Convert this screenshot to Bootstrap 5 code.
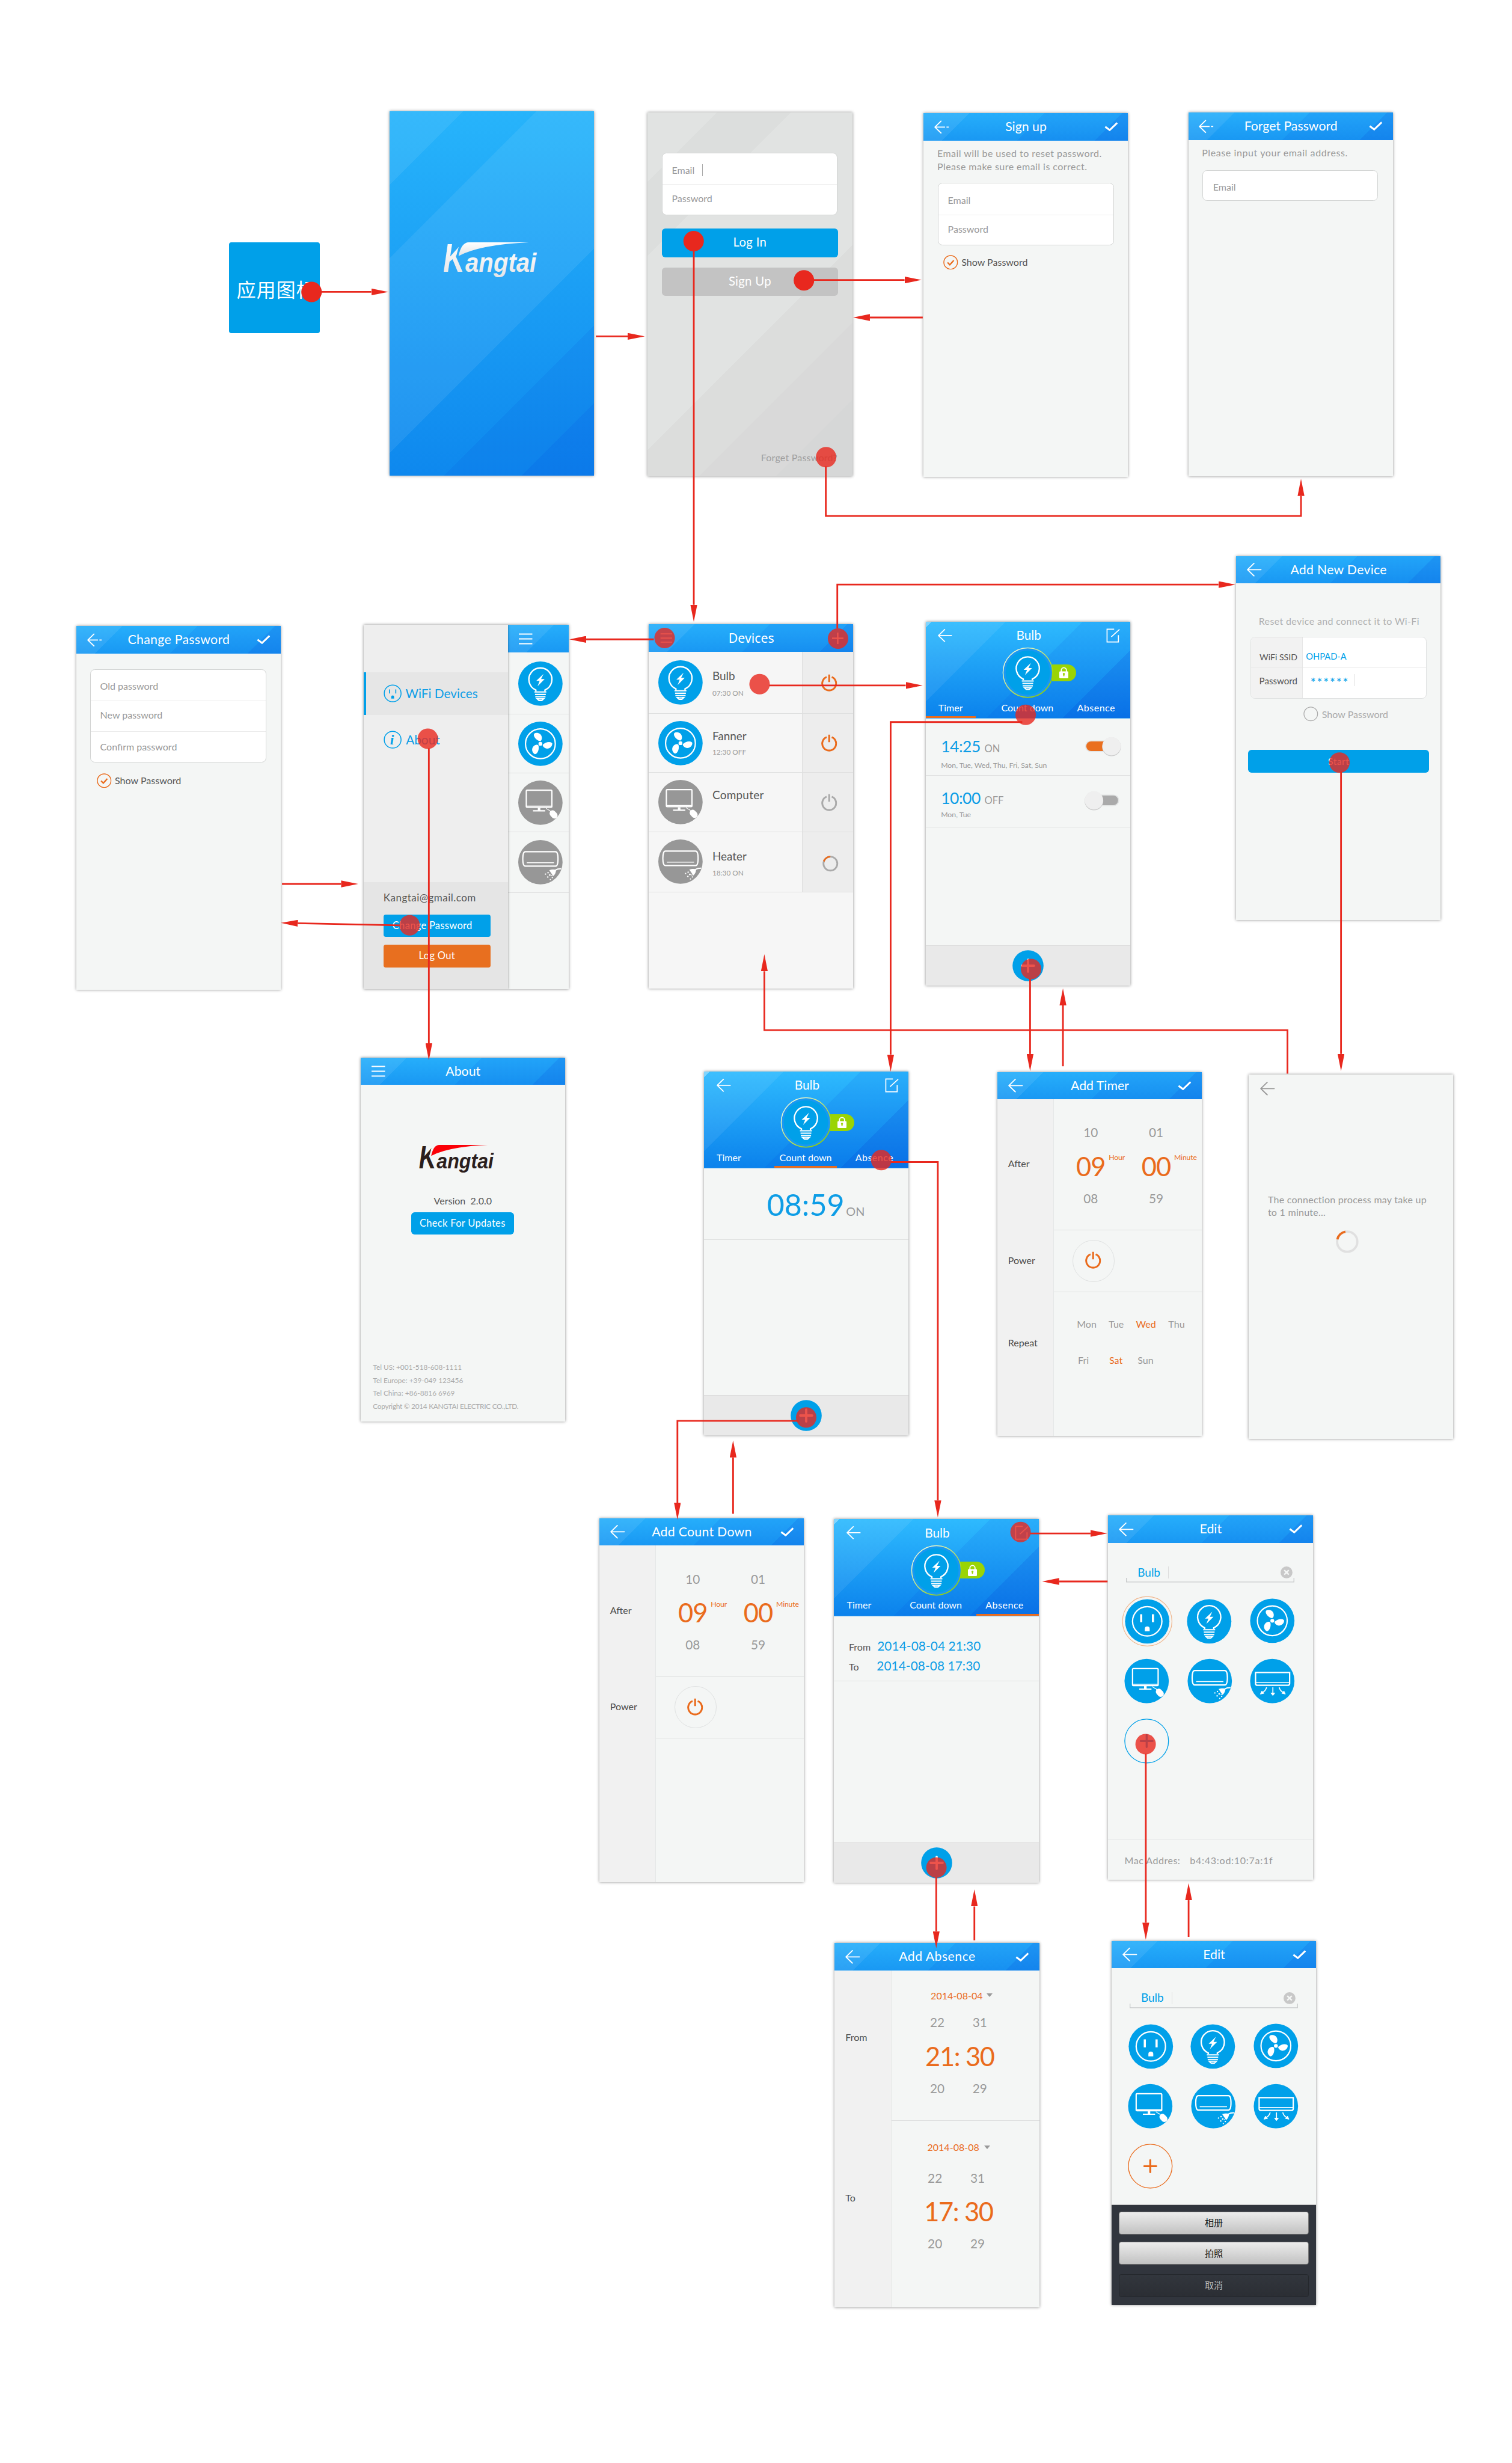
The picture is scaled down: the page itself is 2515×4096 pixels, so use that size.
<!DOCTYPE html>
<html lang="en">
<head>
<meta charset="utf-8">
<title>Kangtai app flow</title>
<link href="https://cdn.jsdelivr.net/npm/bootstrap@5.3.0/dist/css/bootstrap.min.css" rel="stylesheet">
<script src="https://cdn.jsdelivr.net/npm/bootstrap@5.3.0/dist/js/bootstrap.bundle.min.js"></script>
<style>
html,body{margin:0;background:#fff;overflow:hidden}
body{font-family:Lato,"Noto Sans CJK SC",sans-serif;font-size:17px;line-height:1.2;color:#555}
.board{position:relative;width:2659px;height:4331px;zoom:.9457}
svg{display:block;flex:none;overflow:visible}
/* screens placed on the free canvas */
.screen{position:absolute;width:360px;height:640px;background:#f4f6f5;box-shadow:0 0 5px rgba(0,0,0,.45);overflow:hidden}
#s-splash{left:685px;top:196px}#s-login{left:1139px;top:198px}#s-signup{left:1624px;top:199px}#s-forget{left:2090px;top:198px}
#s-change{left:134px;top:1101px}#s-side{left:640px;top:1099px}#s-devices{left:1141px;top:1098px}#s-timer{left:1628px;top:1093px}#s-new{left:2174px;top:978px}
#s-about{left:634px;top:1860px}#s-count{left:1238px;top:1884px}#s-addtimer{left:1754px;top:1885px}#s-connect{left:2196px;top:1890px}
#s-addcount{left:1054px;top:2670px}#s-absence{left:1467px;top:2671px}#s-edit{left:1949px;top:2665px}
#s-addabs{left:1468px;top:3417px}#s-edit2{left:1955px;top:3413px}
.app-tile{position:absolute;left:403px;top:426px;width:160px;height:160px;border-radius:4px;background:#00a0e9;color:#fff;font-size:34px;letter-spacing:1px;padding:7px 0 0 6px;white-space:nowrap}
.flow{position:absolute;left:0;top:0;z-index:5;pointer-events:none}
/* fills */
.bg-splash{background:linear-gradient(135deg,rgba(255,255,255,.07) 0 91.5px,transparent 91.5px 183px,rgba(255,255,255,.07) 183px 425px,transparent 425px 521px,rgba(0,60,210,.09) 521px 617px,rgba(0,50,210,.17) 617px),linear-gradient(#27b4fb,#0e88ee)}
.bg-login{background:linear-gradient(135deg,#e1e3e2 0 86px,#dcdedd 86px 178px,#e1e3e2 178px 420px,#dcdddc 420px 516px,#d9d9d9 516px 612px,#d6d7d7 612px)}
.topbar{height:48px;color:#fff;font-size:22.5px;padding:0 18px 0 19px;flex:none;background:linear-gradient(135deg,rgba(255,255,255,.08) 0 57px,transparent 57px 151px,rgba(0,70,220,.1) 151px 247px,rgba(0,60,215,.22) 247px),linear-gradient(#26aefb,#1998f3)}
.topbar .side-slot{width:44px;flex:none}
.hero{height:171px;color:#fff;flex:none;background:linear-gradient(135deg,rgba(255,255,255,.4) 0 7px,rgba(255,255,255,.07) 7px 99px,transparent 99px 195px,rgba(0,70,220,.1) 195px 290px,rgba(0,50,210,.22) 290px),linear-gradient(#2ebafe,#0b82ec);border-bottom:1px solid #4aa9f2}
.hero-top{height:45px;padding:4px 18px 0 21px;font-size:22px}
.hero-icon{height:90px}
.lock-tab{position:absolute;left:222px;top:30px;width:43px;height:30px;border-radius:0 15px 15px 0;background:#9ad404;padding-left:13px}
.tabs{height:35px;font-size:17px}
.tab-item{height:35px;padding-top:7px;text-align:center;border-bottom:4px solid transparent;line-height:20px;white-space:nowrap}
.tab-item.on{border-color:#ea6b1c}
.tab-a{width:88px;margin-right:36px}.tab-b{width:110px;margin-right:16px}.tab-c{width:110px;padding-right:10px;letter-spacing:.5px}
.ctl{border-radius:6px;border:0;color:#fff;background:#00a0e9;padding:0;display:flex;align-items:center;justify-content:center;--bs-btn-line-height:1.2;letter-spacing:.3px}
.ctl-lg{width:310px;height:50px;font-size:21.5px;padding-bottom:3px}
.field-box{background:#fff;border:1.5px solid #d2d4d3;border-radius:8px;width:309px;color:#999}
.field-box>div{padding-left:16px}
.field-box>div+div{border-top:1px solid #ececec}
.hint{color:#999;line-height:23px;letter-spacing:.45px}
.caret{width:1px;height:21px;background:#aaa}
.g9{color:#999}.ga{color:#aaa}.blue{color:#00a0e9}.orange{color:#ea6b1c}.cyan-t{color:#0d9de6}
.list-line{border-bottom:1.5px solid #dedfdf}
.disc{width:78px;height:78px}
.foot-bar{height:71px;background:#e9e9e9;border-top:1.5px solid #dcdcdc}
.label-col{width:100px;background:#f1f1f1;border-right:1.5px solid #e5e7e7;padding-left:19px;flex:none;color:#4c4c4c}
.label-col>div{padding-bottom:5px}
.num{font-size:22px;color:#999;height:58px;width:115px}
.num.big{font-size:46px;color:#ea6b1c;letter-spacing:-1px}
.unit{position:absolute;left:100%;margin-left:6px;top:5px;font-size:13px;font-weight:400;letter-spacing:-.2px;line-height:16px}
.pnum{width:75px;height:58px;font-size:22px;color:#999}
.tri{width:0;height:0;border:5.5px solid transparent;border-top:7px solid #999;border-bottom:0}
.sheet{background:#31353d;height:177px;border-top:1px solid #bbb;padding:12px 12.5px}
.sheet-btn{height:40px;width:335px;border-radius:4px;border:1px solid #777;background:linear-gradient(#ececec,#c2c2c2);color:#111;font-size:16px;padding:0}
.sheet-btn.dark{background:linear-gradient(#32363d,#2b2e34);border-color:#25282d;color:#bbb}
</style>
</head>
<body>
<svg width="0" height="0" style="position:absolute">
<defs>
<linearGradient id="lg" x1="0" y1="0" x2="0" y2="1"><stop offset="0" stop-color="#fff"/><stop offset="1" stop-color="#e4e4e6"/></linearGradient>
<linearGradient id="ringg" x1="0" y1="0" x2="1" y2="1"><stop offset=".2" stop-color="#e9f5d0"/><stop offset=".8" stop-color="#9ad404"/></linearGradient>
<symbol id="back" viewBox="0 0 26 24"><path d="M12.5 1 1.2 12l11.3 11M1.5 12H25" fill="none" stroke="currentColor" stroke-width="2" stroke-linecap="round" stroke-linejoin="round"/></symbol>
<symbol id="backd" viewBox="0 0 26 24"><path d="M12.5 1 1.2 12l11.3 11M1.5 12H19M21.5 12H25.6" fill="none" stroke="currentColor" stroke-width="2" stroke-linejoin="round"/></symbol>
<symbol id="check" viewBox="0 0 24 16"><path d="M1.5 8.2 9.3 14 22.5 1.5" fill="none" stroke="currentColor" stroke-width="3.2"/></symbol>
<symbol id="menu" viewBox="0 0 24 20"><path d="M0 1.5h24M0 10h24M0 18.5h24" stroke="currentColor" stroke-width="2.2"/></symbol>
<symbol id="pen" viewBox="0 0 24 26"><path d="M14 1.5H1.5v22.5h20V12M23.5 1.8 9 15" fill="none" stroke="currentColor" stroke-width="1.8"/></symbol>
<symbol id="bulb" viewBox="0 0 78 78"><g fill="none" stroke="#fff"><path d="M31 52.5v-2.2A20.3 20.3 0 1 1 47 50.3v2.2" stroke-width="2.5"/><path d="M28.5 53.7h21M29.5 58h19M30 62.2h18" stroke-width="2.2"/></g><path d="M30.5 64.5h17l-5.5 5.2h-6z" fill="#fff"/><path d="M36 66.6h6" stroke="#00a0e9"/><path d="M44.5 22 31.7 34.2h6L34 43.5 46.5 31h-6.3z" fill="#fff"/></symbol>
<symbol id="fan" viewBox="0 0 78 78"><circle cx="39" cy="39" r="26.2" fill="none" stroke="#fff" stroke-width="2.3"/><g fill="#fff"><path id="bl" d="M38.5 34.5C32 33.500 25.500 25.500 28 21.500C32 18 40.500 20.500 41.500 27.500C42 31 40.500 34 38.500 34.500z"/><use href="#bl" transform="rotate(120 39 39)"/><use href="#bl" transform="rotate(240 39 39)"/><circle cx="39" cy="39" r="3.4"/></g></symbol>
<symbol id="pc" viewBox="0 0 78 78"><g fill="none" stroke="#fff"><rect x="14.200" y="17" width="45" height="30" rx="1.500" stroke-width="2.300"/><path d="M14 44.800h45" stroke-width="1.500"/><path d="M36.700 48v5" stroke-width="4.500"/><path d="M26 53.200h21.500" stroke-width="2.300"/><path d="M49 48.500c2 4 7 2 8 6.500" stroke-width="1.200"/></g><path d="M0-7.500C5-7.500 5.500-3 5.500 1.500C5.500 6.500 2.500 8 0 8S-5.500 6.500-5.500 1.500C-5.500-3-5-7.500 0-7.500z" fill="#fff" transform="translate(62 59.500) rotate(-42)"/></symbol>
<symbol id="heat" viewBox="0 0 78 78"><g fill="none" stroke="#fff" stroke-width="2.300"><path d="M12.500 20.500h53q4.500 0 4.500 12.700t-4.500 12.700h-53Q8 46 8 33.200t4.500-12.700z"/><path d="M15 40h48" stroke-width="1.700"/><path d="M64 54c4-3.500 7-3.500 11.500-3.500" stroke-width="2.200"/></g><path d="M54.500 53c4-1.500 9.500-1.500 12-.5c0 4-1.500 7.500-5 11z" fill="#fff"/><g fill="#fff"><circle cx="52.500" cy="57.500" r="1.300"/><circle cx="48" cy="60" r="1.200"/><circle cx="55.500" cy="61.500" r="1.400"/><circle cx="52" cy="65" r="1.300"/><circle cx="60" cy="66" r="1.200"/><circle cx="56.500" cy="69.500" r="1.100"/><circle cx="59" cy="62.500" r="1"/></g></symbol>
<symbol id="ac" viewBox="0 0 78 78"><g fill="none" stroke="#fff" stroke-width="2.400"><path d="M9.500 24h60v19q0 3.500-3.500 3.500H13q-3.500 0-3.500-3.500z"/><path d="M9.500 41.200h60" stroke-width="1.500"/><path d="M29 50q-2 7-8 9.500M40 50v12M51 50q2 7 8 9.500" stroke-width="1.800"/></g><path d="M18 62l2.500-5.500 4 4zM36.500 60h7L40 64.500zM62 62l-2.500-5.500-4 4z" fill="#fff" stroke="#fff"/></symbol>
<symbol id="plug" viewBox="0 0 78 78"><circle cx="39" cy="39" r="25.800" fill="none" stroke="#fff" stroke-width="2.400"/><path d="M26.500 26.500h3.800v14h-3.800zM47.200 26.500H51v14h-3.800zM34.700 56.500v-4.300a4.300 4.300 0 0 1 8.600 0v4.300z" fill="#fff"/></symbol>
<symbol id="power" viewBox="0 0 28 32"><path d="M9.500 6.200A12.200 12.200 0 1 0 18.500 6.200M14 1.800V15" fill="none" stroke="currentColor" stroke-width="3.200" stroke-linecap="butt"/></symbol>
<symbol id="lock" viewBox="0 0 16 20"><path d="M3.500 9V6a4.500 4.500 0 0 1 9 0v3" fill="none" stroke="#fff" stroke-width="2"/><rect y="8" width="16" height="12" rx="1.500" fill="#fff"/><path d="M8 12v4.500" stroke="#9ad404" stroke-width="2"/><circle cx="8" cy="12.500" r="1.800" fill="#9ad404"/></symbol>
<symbol id="okring" viewBox="0 0 26 26"><circle cx="13" cy="13" r="12" fill="none" stroke="#ea6b1c" stroke-width="1.500"/><path d="M7.500 13.200l4 4L18.500 9.500" fill="none" stroke="#ea6b1c" stroke-width="2.400"/></symbol>
<clipPath id="kc"><path d="M-6-6H28L20 24 50 60H-6z"/></clipPath>
</defs>
</svg>

<div class="board">

<div class="app-tile d-flex align-items-center justify-content-center">应用图标</div>

<section class="screen bg-splash" id="s-splash">
  <svg width="161" height="66" viewBox="0 0 161 66" style="margin:230px 0 0 97px" fill="url(#lg)" font-family="Liberation Sans" font-weight="700" font-style="italic"><text x="-3" y="52" font-size="70" textLength="38" lengthAdjust="spacingAndGlyphs" clip-path="url(#kc)">K</text><path d="M24 24Q29 0 42 0L148 0Q62 4 24 24z"/><text x="36" y="52" font-size="46" textLength="125" lengthAdjust="spacingAndGlyphs">angtai</text></svg>
</section>

<section class="screen bg-login" id="s-login">
  <div class="d-flex flex-column align-items-center" style="padding-top:71px">
    <div class="field-box">
      <div class="d-flex align-items-center" style="height:54px;padding-top:4px">Email<span class="caret" style="margin-left:13px"></span></div>
      <div class="d-flex align-items-center" style="height:53px;padding-bottom:4px">Password</div>
    </div>
    <button class="btn ctl ctl-lg" style="margin-top:24px">Log In</button>
    <button class="btn ctl ctl-lg" style="margin-top:18px;background:#c3c3c3">Sign Up</button>
  </div>
  <div class="text-end" style="padding:274px 26px 0 0;color:#a0a0a0;letter-spacing:.2px">Forget Password?</div>
</section>

<section class="screen" id="s-signup">
  <header class="topbar d-flex align-items-center"><span class="side-slot"><svg width="26" height="24"><use href="#backd"/></svg></span><span class="flex-fill text-center">Sign up</span><span class="side-slot d-flex justify-content-end"><svg width="24" height="16"><use href="#check"/></svg></span></header>
  <div class="hint" style="padding:11px 0 0 24.500px">Email will be used to reset password.<br>Please make sure email is correct.</div>
  <div class="field-box" style="margin:18px 0 0 26px"><div class="d-flex align-items-center" style="height:54px;padding-top:4px">Email</div><div class="d-flex align-items-center" style="height:53px;padding-bottom:4px">Password</div></div>
  <div class="d-flex align-items-center" style="margin:17px 0 0 35px;gap:6px;height:26px"><svg width="26" height="26"><use href="#okring"/></svg>Show Password</div>
</section>

<section class="screen" id="s-forget">
  <header class="topbar d-flex align-items-center"><span class="side-slot"><svg width="26" height="24"><use href="#backd"/></svg></span><span class="flex-fill text-center">Forget Password</span><span class="side-slot d-flex justify-content-end"><svg width="24" height="16"><use href="#check"/></svg></span></header>
  <div class="hint" style="padding:11px 0 0 24px;letter-spacing:.6px">Please input your email address.</div>
  <div class="field-box" style="margin:19px 0 0 24.500px"><div class="d-flex align-items-center" style="height:52px;padding-top:4px;padding-left:18px">Email</div></div>
</section>

<section class="screen" id="s-change">
  <header class="topbar d-flex align-items-center"><span class="side-slot"><svg width="26" height="24"><use href="#backd"/></svg></span><span class="flex-fill text-center" style="letter-spacing:.3px">Change Password</span><span class="side-slot d-flex justify-content-end"><svg width="24" height="16"><use href="#check"/></svg></span></header>
  <div class="field-box" style="margin:27.500px 0 0 25px"><div class="d-flex align-items-center" style="height:54px;padding-top:4px">Old password</div><div class="d-flex align-items-center" style="height:54px;padding-bottom:4px">New password</div><div class="d-flex align-items-center" style="height:54px">Confirm password</div></div>
  <div class="d-flex align-items-center" style="margin:19px 0 0 36px;gap:6px;height:26px"><svg width="26" height="26"><use href="#okring"/></svg>Show Password</div>
</section>

<section class="screen d-flex" id="s-side">
  <div class="d-flex flex-column position-relative" style="width:254px;background:#eee;box-shadow:0 0 4px rgba(0,0,0,.4);z-index:1">
    <div style="height:83px"></div>
    <div class="d-flex align-items-center cyan-t" style="height:75px;background:#e6e6e6;border-left:5px solid #00a0e9;padding-left:30px;gap:7px;font-size:22px"><svg width="32" height="32" viewBox="0 0 32 32"><circle cx="16" cy="16" r="14.800" fill="none" stroke="#00a0e9" stroke-width="1.600"/><path d="M10.500 9v7M21.500 9v7" stroke="#00a0e9" stroke-width="1.800"/><path d="M13.500 25v-3a2.500 2.500 0 0 1 5 0v3z" fill="#00a0e9"/></svg>WiFi Devices</div>
    <div class="d-flex align-items-center cyan-t" style="height:88px;padding-left:35px;gap:7px;font-size:22px"><svg width="32" height="32" viewBox="0 0 32 32"><circle cx="16" cy="16" r="14.800" fill="none" stroke="#00a0e9" stroke-width="1.600"/><text x="11.500" y="24" font-family="Liberation Serif" font-style="italic" font-weight="700" font-size="25" fill="#00a0e9">i</text></svg>About</div>
    <div class="mt-auto" style="height:188px;background:#e5e5e5;padding:17px 0 0 34.500px">
      <div style="font-size:18px;height:22px;letter-spacing:.5px">Kangtai@gmail.com</div>
      <button class="btn ctl" style="width:188px;height:40px;margin-top:18px;border-radius:4px;font-size:17.500px;padding-right:16px">Change Password</button>
      <button class="btn ctl" style="width:188px;height:40px;margin-top:13.500px;border-radius:4px;background:#e86f1f;font-size:17.500px">Log Out</button>
    </div>
  </div>
  <div class="d-flex flex-column" style="width:106px">
    <div class="topbar d-flex align-items-center"><svg width="24" height="20"><use href="#menu"/></svg></div>
    <div class="list-line d-flex align-items-center justify-content-center" style="height:109px;padding:2px 0 0 8px"><svg class="disc"><circle cx="39" cy="39" r="39" fill="#00a0e9"/><use href="#bulb"/></svg></div>
    <div class="list-line d-flex align-items-center justify-content-center" style="height:104px;padding-left:8px"><svg class="disc"><circle cx="39" cy="39" r="39" fill="#00a0e9"/><use href="#fan"/></svg></div>
    <div class="list-line d-flex align-items-center justify-content-center" style="height:104px;padding-left:8px"><svg class="disc"><circle cx="39" cy="39" r="39" fill="#979797"/><use href="#pc"/></svg></div>
    <div class="list-line d-flex align-items-center justify-content-center" style="height:106px;padding-left:8px"><svg class="disc"><circle cx="39" cy="39" r="39" fill="#979797"/><use href="#heat"/></svg></div>
  </div>
</section>

<section class="screen" id="s-devices" style="background:#f6f6f6">
  <header class="topbar d-flex align-items-center" style="font-family:'Noto Sans',sans-serif"><span class="side-slot"><svg width="24" height="17"><use href="#menu"/></svg></span><span class="flex-fill text-center">Devices</span><span class="side-slot d-flex justify-content-end"><svg width="20" height="20"><path d="M10 0v20M0 10h20" stroke="#fff" stroke-width="2.500"/></svg></span></header>
  <div class="list-line d-flex" style="height:109px"><div class="d-flex align-items-center" style="width:270px;padding-left:17px;gap:17px"><svg class="disc"><circle cx="39" cy="39" r="39" fill="#00a0e9"/><use href="#bulb"/></svg><div style="padding-top:4px"><div style="font-size:20px;height:35px">Bulb</div><div class="g9" style="font-size:12.500px">07:30 ON</div></div></div><div class="flex-fill d-flex align-items-center justify-content-center" style="background:#ededed;border-left:1px solid #ddd;padding-left:4px;color:#ea6b1c"><svg width="28" height="32"><use href="#power"/></svg></div></div>
  <div class="list-line d-flex" style="height:104px"><div class="d-flex align-items-center" style="width:270px;padding-left:17px;gap:17px"><svg class="disc"><circle cx="39" cy="39" r="39" fill="#00a0e9"/><use href="#fan"/></svg><div><div style="font-size:20px;height:33px">Fanner</div><div class="g9" style="font-size:12.500px">12:30 OFF</div></div></div><div class="flex-fill d-flex align-items-center justify-content-center" style="background:#ededed;border-left:1px solid #ddd;padding-left:4px;color:#ea6b1c"><svg width="28" height="32"><use href="#power"/></svg></div></div>
  <div class="list-line d-flex" style="height:104px"><div class="d-flex align-items-center" style="width:270px;padding-left:17px;gap:17px"><svg class="disc"><circle cx="39" cy="39" r="39" fill="#979797"/><use href="#pc"/></svg><div style="font-size:20px;height:48px;letter-spacing:.3px">Computer</div></div><div class="flex-fill d-flex align-items-center justify-content-center" style="background:#ededed;border-left:1px solid #ddd;padding-left:4px;color:#aaa"><svg width="28" height="32"><use href="#power"/></svg></div></div>
  <div class="list-line d-flex" style="height:106px"><div class="d-flex align-items-center" style="width:270px;padding-left:17px;gap:17px"><svg class="disc"><circle cx="39" cy="39" r="39" fill="#979797"/><use href="#heat"/></svg><div style="padding-top:6px"><div style="font-size:20px;height:34px">Heater</div><div class="g9" style="font-size:12.500px">18:30 ON</div></div></div><div class="flex-fill d-flex align-items-center justify-content-center" style="background:#ededed;border-left:1px solid #ddd;padding:6px 0 0 8px"><svg width="28" height="28" viewBox="0 0 28 28" fill="none" stroke-width="3"><circle cx="14" cy="14" r="12.200" stroke="#aaa"/><path d="M2.500 10A12.200 12.200 0 0 1 14 1.800" stroke="#ea6b1c"/></svg></div></div>
</section>

<section class="screen d-flex flex-column" id="s-timer">
  <header class="hero">
    <div class="hero-top d-flex align-items-center"><span style="width:44px"><svg width="27" height="23"><use href="#back"/></svg></span><span class="flex-fill text-center">Bulb</span><span style="width:44px" class="d-flex justify-content-end"><svg width="24" height="26"><use href="#pen"/></svg></span></div>
    <div class="hero-icon position-relative"><div class="lock-tab d-flex align-items-center"><svg width="16" height="20"><use href="#lock"/></svg></div><svg width="90" height="90" class="position-relative" style="margin-left:135px"><circle cx="45" cy="45" r="43.500" fill="#1a98f2" stroke="url(#ringg)" stroke-width="1.600"/><circle cx="45" cy="45" r="39" fill="#00a0e9"/><use href="#bulb" x="6" y="6" width="78" height="78"/></svg></div>
    <div class="tabs d-flex"><div class="tab-item tab-a on">Timer</div><div class="tab-item tab-b">Count down</div><div class="tab-item tab-c">Absence</div></div>
  </header>
  <div class="list-line d-flex align-items-center" style="height:100px;padding:24px 16px 0 27px">
    <div class="flex-fill"><div class="d-flex align-items-baseline" style="gap:7px"><span class="cyan-t" style="font-size:28px;letter-spacing:-.5px">14:25</span><span class="g9" style="font-size:17.500px">ON</span></div><div class="g9" style="font-size:13px;margin-top:8px">Mon, Tue, Wed, Thu, Fri, Sat, Sun</div></div>
    <svg width="64" height="36" viewBox="0 0 64 36" style="margin-top:-27px"><rect x="1" y="8" width="60" height="20" rx="10" fill="#e2e4e4"/><rect x="3" y="9.500" width="56" height="17" rx="8.500" fill="#ea6f1f"/><circle cx="47.500" cy="19" r="16.500" fill="#ccc"/><circle cx="47.500" cy="18" r="16.200" fill="#efefef"/></svg>
  </div>
  <div class="list-line d-flex align-items-center" style="height:91px;padding:10px 16px 0 27px">
    <div class="flex-fill"><div class="d-flex align-items-baseline" style="gap:7px"><span class="cyan-t" style="font-size:28px;letter-spacing:-.5px">10:00</span><span class="g9" style="font-size:17.500px">OFF</span></div><div class="g9" style="font-size:13px;margin-top:4px">Mon, Tue</div></div>
    <svg width="64" height="36" viewBox="0 0 64 36" style="margin-top:-12px"><rect x="1" y="8" width="60" height="20" rx="10" fill="#e2e4e4"/><rect x="3" y="9.500" width="56" height="17" rx="8.500" fill="#aaa"/><circle cx="16.500" cy="19" r="16.500" fill="#ccc"/><circle cx="16.500" cy="18" r="16.200" fill="#efefef"/></svg>
  </div>
  <div class="foot-bar mt-auto d-flex justify-content-center align-items-center"><svg width="55" height="55"><circle cx="27.500" cy="27.500" r="27.300" fill="#00a0e9"/><path d="M27.500 17v21M17 27.500h21" stroke="#fff" stroke-width="4" stroke-linecap="round"/></svg></div>
</section>

<section class="screen" id="s-new">
  <header class="topbar d-flex align-items-center"><span class="side-slot"><svg width="26" height="24"><use href="#back"/></svg></span><span class="flex-fill text-center" style="letter-spacing:.3px">Add New Device</span><span class="side-slot"></span></header>
  <div style="padding:56px 0 0 40px;color:#b0b0b0;letter-spacing:.35px">Reset device and connect it to Wi-Fi</div>
  <div class="d-flex flex-column overflow-hidden" style="width:310px;height:109px;margin:17px 0 0 25px;border:1.500px solid #dfe1e1;border-radius:8px;background:#fff">
    <div class="d-flex" style="height:53px;border-bottom:1px solid #e6e6e6"><div class="d-flex align-items-center justify-content-end" style="width:91px;background:#f2f2f2;border-right:1px solid #e6e6e6;padding:17px 8px 0 0;font-size:15px">WiFi SSID</div><div class="d-flex align-items-center blue" style="padding:17px 0 0 6px;font-size:15.500px">OHPAD-A</div></div>
    <div class="d-flex" style="height:54px"><div class="d-flex align-items-center justify-content-end" style="width:91px;background:#f2f2f2;border-right:1px solid #e6e6e6;padding:0 8px 6px 0;font-size:16px">Password</div><div class="d-flex align-items-center blue" style="padding:0 0 8px 14px;letter-spacing:2px"><span style="font-size:22px;padding-top:8px">******</span><span class="caret ms-2" style="background:#ddd"></span></div></div>
  </div>
  <div class="d-flex align-items-center ga" style="margin:14px 0 0 119px;gap:6px;height:26px"><svg width="26" height="26"><circle cx="13" cy="13" r="12" fill="none" stroke="#aaa" stroke-width="1.300"/></svg>Show Password</div>
  <button class="btn ctl" style="width:318px;height:40px;margin:50px 0 0 21.500px;font-size:17px">Start</button>
</section>

<section class="screen d-flex flex-column" id="s-about">
  <header class="topbar d-flex align-items-center"><span class="side-slot"><svg width="24" height="20"><use href="#menu"/></svg></span><span class="flex-fill text-center">About</span><span class="side-slot"></span></header>
  <svg width="129" height="53" viewBox="0 0 161 66" style="margin:105px 0 0 105px" fill="#2b1e1c" font-family="Liberation Sans" font-weight="700" font-style="italic"><text x="-3" y="52" font-size="70" textLength="38" lengthAdjust="spacingAndGlyphs" clip-path="url(#kc)">K</text><path d="M24 24Q29 0 42 0L148 0Q62 4 24 24z" fill="#fb0007"/><text x="36" y="52" font-size="46" textLength="125" lengthAdjust="spacingAndGlyphs">angtai</text></svg>
  <div class="text-center" style="margin-top:35px;white-space:pre">Version  2.0.0</div>
  <button class="btn ctl" style="width:181px;height:40px;margin:10px 0 0 89px;font-size:17.500px">Check For Updates</button>
  <div class="ga mt-auto" style="padding:0 0 16px 22px;font-size:12.500px;line-height:22.700px"><span>Tel US: +001-518-608-1111</span><br>Tel Europe: +39-049 123456<br>Tel China: +86-8816 6969<br><span style="letter-spacing:-.28px">Copyright © 2014 KANGTAI ELECTRIC CO.,LTD.</span></div>
</section>

<section class="screen d-flex flex-column" id="s-count">
  <header class="hero">
    <div class="hero-top d-flex align-items-center"><span style="width:44px"><svg width="27" height="23"><use href="#back"/></svg></span><span class="flex-fill text-center">Bulb</span><span style="width:44px" class="d-flex justify-content-end"><svg width="24" height="26"><use href="#pen"/></svg></span></div>
    <div class="hero-icon position-relative"><div class="lock-tab d-flex align-items-center"><svg width="16" height="20"><use href="#lock"/></svg></div><svg width="90" height="90" class="position-relative" style="margin-left:135px"><circle cx="45" cy="45" r="43.500" fill="#1a98f2" stroke="url(#ringg)" stroke-width="1.600"/><circle cx="45" cy="45" r="39" fill="#00a0e9"/><use href="#bulb" x="6" y="6" width="78" height="78"/></svg></div>
    <div class="tabs d-flex"><div class="tab-item tab-a">Timer</div><div class="tab-item tab-b on">Count down</div><div class="tab-item tab-c">Absence</div></div>
  </header>
  <div class="list-line d-flex align-items-baseline" style="height:125px;padding:31px 0 0 111px;gap:3px"><span class="cyan-t" style="font-size:53px">08:59</span><span class="g9" style="font-size:21px">ON</span></div>
  <div class="foot-bar mt-auto d-flex justify-content-center align-items-center"><svg width="55" height="55"><circle cx="27.500" cy="27.500" r="27.300" fill="#00a0e9"/><path d="M27.500 17v21M17 27.500h21" stroke="#fff" stroke-width="4" stroke-linecap="round"/></svg></div>
</section>

<section class="screen d-flex flex-column" id="s-addtimer">
  <header class="topbar d-flex align-items-center"><span class="side-slot"><svg width="26" height="24"><use href="#back"/></svg></span><span class="flex-fill text-center">Add Timer</span><span class="side-slot d-flex justify-content-end"><svg width="24" height="16"><use href="#check"/></svg></span></header>
  <div class="d-flex flex-fill">
    <div class="label-col d-flex flex-column"><div class="d-flex align-items-center" style="height:231px">After</div><div class="d-flex align-items-center" style="height:108px">Power</div><div class="d-flex align-items-center" style="height:182px">Repeat</div></div>
    <div class="flex-fill">
      <div class="list-line d-flex" style="height:231px;padding:30px 0 0 7px">
        <div><div class="num d-flex align-items-center justify-content-center">10</div><div class="num big d-flex align-items-center justify-content-center"><span class="position-relative">09<span class="unit">Hour</span></span></div><div class="num d-flex align-items-center justify-content-center">08</div></div>
        <div><div class="num d-flex align-items-center justify-content-center">01</div><div class="num big d-flex align-items-center justify-content-center"><span class="position-relative">00<span class="unit">Minute</span></span></div><div class="num d-flex align-items-center justify-content-center">59</div></div>
      </div>
      <div class="list-line d-flex align-items-center orange" style="height:108px;padding-left:32px"><span class="d-flex align-items-center justify-content-center rounded-circle" style="width:74px;height:74px;border:1px solid #dfe1e1"><svg width="28" height="32" style="margin-top:-5px"><use href="#power"/></svg></span></div>
      <div style="padding:46px 0 0 40px;color:#999"><div class="d-flex"><span style="width:56px">Mon</span><span style="width:48px">Tue</span><span class="orange" style="width:57px">Wed</span><span>Thu</span></div><div class="d-flex" style="margin-top:43px"><span style="width:57px;padding-left:2px">Fri</span><span class="orange" style="width:50px">Sat</span><span>Sun</span></div></div>
    </div>
  </div>
</section>

<section class="screen" id="s-connect">
  <div style="padding:12px 0 0 20px;color:#999"><svg width="26" height="24"><use href="#back"/></svg></div>
  <div class="hint" style="padding:173px 0 0 34px;line-height:22px;letter-spacing:.25px">The connection process may take up<br>to 1 minute...</div>
  <svg width="40" height="40" viewBox="0 0 40 40" style="margin:21px 0 0 154px" fill="none" stroke-width="4"><circle cx="20" cy="20" r="17.800" stroke="#e0e0e0"/><path d="M2.600 16A17.800 17.800 0 0 1 16.800 2.500" stroke="#ea6b1c"/></svg>
</section>

<section class="screen d-flex flex-column" id="s-addcount">
  <header class="topbar d-flex align-items-center"><span class="side-slot"><svg width="26" height="24"><use href="#back"/></svg></span><span class="flex-fill text-center" style="letter-spacing:.3px">Add Count Down</span><span class="side-slot d-flex justify-content-end"><svg width="24" height="16"><use href="#check"/></svg></span></header>
  <div class="d-flex flex-fill">
    <div class="label-col d-flex flex-column"><div class="d-flex align-items-center" style="height:231px">After</div><div class="d-flex align-items-center" style="height:108px">Power</div></div>
    <div class="flex-fill">
      <div class="list-line d-flex" style="height:231px;padding:30px 0 0 7px">
        <div><div class="num d-flex align-items-center justify-content-center">10</div><div class="num big d-flex align-items-center justify-content-center"><span class="position-relative">09<span class="unit">Hour</span></span></div><div class="num d-flex align-items-center justify-content-center">08</div></div>
        <div><div class="num d-flex align-items-center justify-content-center">01</div><div class="num big d-flex align-items-center justify-content-center"><span class="position-relative">00<span class="unit">Minute</span></span></div><div class="num d-flex align-items-center justify-content-center">59</div></div>
      </div>
      <div class="list-line d-flex align-items-center orange" style="height:108px;padding-left:32px"><span class="d-flex align-items-center justify-content-center rounded-circle" style="width:74px;height:74px;border:1px solid #dfe1e1"><svg width="28" height="32" style="margin-top:-3px"><use href="#power"/></svg></span></div>
    </div>
  </div>
</section>

<section class="screen d-flex flex-column" id="s-absence">
  <header class="hero">
    <div class="hero-top d-flex align-items-center"><span style="width:44px"><svg width="27" height="23"><use href="#back"/></svg></span><span class="flex-fill text-center">Bulb</span><span style="width:44px" class="d-flex justify-content-end"><svg width="24" height="26"><use href="#pen"/></svg></span></div>
    <div class="hero-icon position-relative"><div class="lock-tab d-flex align-items-center"><svg width="16" height="20"><use href="#lock"/></svg></div><svg width="90" height="90" class="position-relative" style="margin-left:135px"><circle cx="45" cy="45" r="43.500" fill="#1a98f2" stroke="url(#ringg)" stroke-width="1.600"/><circle cx="45" cy="45" r="39" fill="#00a0e9"/><use href="#bulb" x="6" y="6" width="78" height="78"/></svg></div>
    <div class="tabs d-flex"><div class="tab-item tab-a">Timer</div><div class="tab-item tab-b">Count down</div><div class="tab-item tab-c on">Absence</div></div>
  </header>
  <div class="list-line" style="height:115px;padding:40px 0 0 26px">
    <div class="d-flex align-items-baseline" style="height:34px"><span style="width:50px">From</span><span class="cyan-t" style="font-size:22px;letter-spacing:.1px">2014-08-04 21:30</span></div>
    <div class="d-flex align-items-baseline"><span style="width:49px">To</span><span class="cyan-t" style="font-size:22px;letter-spacing:.1px">2014-08-08 17:30</span></div>
  </div>
  <div class="foot-bar mt-auto d-flex justify-content-center align-items-center"><svg width="55" height="55"><circle cx="27.500" cy="27.500" r="27.300" fill="#00a0e9"/><path d="M27.500 17v21M17 27.500h21" stroke="#fff" stroke-width="4" stroke-linecap="round"/></svg></div>
</section>

<section class="screen d-flex flex-column" id="s-edit">
  <header class="topbar d-flex align-items-center"><span class="side-slot"><svg width="26" height="24"><use href="#back"/></svg></span><span class="flex-fill text-center">Edit</span><span class="side-slot d-flex justify-content-end"><svg width="24" height="16"><use href="#check"/></svg></span></header>
  <div class="d-flex align-items-center blue position-relative" style="width:296px;height:34px;margin:36px 0 0 32px;padding:0 4px 1px 20px;font-size:20px">Bulb<span class="caret" style="background:#ddd;margin-left:14px"></span><svg class="ms-auto" width="21" height="21" viewBox="0 0 21 21"><circle cx="10.500" cy="10.500" r="10.500" fill="#c8c8c8"/><path d="M6.500 6.500l8 8m0-8l-8 8" stroke="#f4f6f5" stroke-width="2.600"/></svg><svg class="position-absolute start-0 bottom-0" width="296" height="8"><path d="M.7 0v7.300h294.600V0" fill="none" stroke="#c8cacb" stroke-width="1.400"/></svg></div>
  <svg width="360" height="320" viewBox="0 118 360 320"><g fill="#00a0e9"><circle cx="69" cy="186" r="39"/><circle cx="178" cy="186" r="39"/><circle cx="289" cy="185" r="39"/><circle cx="68" cy="291" r="39"/><circle cx="179" cy="291" r="39"/><circle cx="289" cy="291" r="39"/></g><circle cx="69" cy="186" r="43.500" fill="none" stroke="#f0b48a" stroke-width="1.200"/>
    <use href="#plug" x="30" y="147" width="78" height="78"/><use href="#bulb" x="139" y="147" width="78" height="78"/><use href="#fan" x="250" y="146" width="78" height="78"/><use href="#pc" x="29" y="252" width="78" height="78"/><use href="#heat" x="140" y="252" width="78" height="78"/><use href="#ac" x="250" y="252" width="78" height="78"/>
    <circle cx="68" cy="396.500" r="38.500" fill="none" stroke="#00a0e9" stroke-width="1.400"/><path d="M68 386v21M57.500 396.500h21" stroke="#00a0e9" stroke-width="3.500" stroke-linecap="round"/></svg>
  <div class="d-flex align-items-center mt-auto g9" style="height:71px;border-top:1.500px solid #e0e2e2;padding:3px 0 0 29px"><span style="width:115px;letter-spacing:.5px">Mac Addres:</span><span style="letter-spacing:.75px">b4:43:od:10:7a:1f</span></div>
</section>

<section class="screen d-flex flex-column" id="s-addabs">
  <header class="topbar d-flex align-items-center"><span class="side-slot"><svg width="26" height="24"><use href="#back"/></svg></span><span class="flex-fill text-center" style="letter-spacing:.5px">Add Absence</span><span class="side-slot d-flex justify-content-end"><svg width="24" height="16"><use href="#check"/></svg></span></header>
  <div class="d-flex flex-fill">
    <div class="label-col d-flex flex-column"><div class="d-flex align-items-center" style="height:240px">From</div><div class="d-flex align-items-center" style="height:323px">To</div></div>
    <div class="flex-fill">
      <div class="list-line" style="height:265px;padding-top:29px">
        <div class="d-flex align-items-center orange" style="height:30px;padding-left:69px;gap:7px">2014-08-04<span class="tri"></span></div>
        <div style="padding:4px 0 0 43px"><div class="d-flex"><div class="pnum d-flex align-items-center justify-content-center">22</div><div class="pnum d-flex align-items-center justify-content-center">31</div></div><div class="num big d-flex align-items-center justify-content-center" style="width:154px;letter-spacing:-1.500px">21: 30</div><div class="d-flex"><div class="pnum d-flex align-items-center justify-content-center">20</div><div class="pnum d-flex align-items-center justify-content-center">29</div></div></div>
      </div>
      <div style="padding-top:31px">
        <div class="d-flex align-items-center orange" style="height:30px;padding-left:63px;gap:9px">2014-08-08<span class="tri"></span></div>
        <div style="padding:10px 0 0 39px"><div class="d-flex"><div class="pnum d-flex align-items-center justify-content-center">22</div><div class="pnum d-flex align-items-center justify-content-center">31</div></div><div class="num big d-flex align-items-center justify-content-center" style="width:158px;letter-spacing:-1.500px">17: 30</div><div class="d-flex"><div class="pnum d-flex align-items-center justify-content-center">20</div><div class="pnum d-flex align-items-center justify-content-center">29</div></div></div>
      </div>
    </div>
  </div>
</section>

<section class="screen d-flex flex-column" id="s-edit2">
  <header class="topbar d-flex align-items-center"><span class="side-slot"><svg width="26" height="24"><use href="#back"/></svg></span><span class="flex-fill text-center">Edit</span><span class="side-slot d-flex justify-content-end"><svg width="24" height="16"><use href="#check"/></svg></span></header>
  <div class="d-flex align-items-center blue position-relative" style="width:296px;height:34px;margin:36px 0 0 32px;padding:0 4px 1px 20px;font-size:20px">Bulb<span class="caret" style="background:#ddd;margin-left:14px"></span><svg class="ms-auto" width="21" height="21" viewBox="0 0 21 21"><circle cx="10.500" cy="10.500" r="10.500" fill="#c8c8c8"/><path d="M6.500 6.500l8 8m0-8l-8 8" stroke="#f4f6f5" stroke-width="2.600"/></svg><svg class="position-absolute start-0 bottom-0" width="296" height="8"><path d="M.7 0v7.300h294.600V0" fill="none" stroke="#c8cacb" stroke-width="1.400"/></svg></div>
  <svg width="360" height="320" viewBox="0 118 360 320"><g fill="#00a0e9"><circle cx="69" cy="186" r="39"/><circle cx="178" cy="186" r="39"/><circle cx="289" cy="185" r="39"/><circle cx="68" cy="291" r="39"/><circle cx="179" cy="291" r="39"/><circle cx="289" cy="291" r="39"/></g>
    <use href="#plug" x="30" y="147" width="78" height="78"/><use href="#bulb" x="139" y="147" width="78" height="78"/><use href="#fan" x="250" y="146" width="78" height="78"/><use href="#pc" x="29" y="252" width="78" height="78"/><use href="#heat" x="140" y="252" width="78" height="78"/><use href="#ac" x="250" y="252" width="78" height="78"/>
    <circle cx="68" cy="396.500" r="38.500" fill="none" stroke="#ea6b1c" stroke-width="1.400"/><path d="M68 386v21M57.500 396.500h21" stroke="#ea6b1c" stroke-width="3.500" stroke-linecap="round"/></svg>
  <div class="sheet mt-auto d-flex flex-column"><button class="btn sheet-btn">相册</button><button class="btn sheet-btn" style="margin-top:13.500px">拍照</button><button class="btn sheet-btn dark" style="margin-top:16.500px">取消</button></div>
</section>

<!-- navigation arrows and tap points -->
<svg class="flow" width="2659" height="4331" fill="none" stroke="#e8281e" stroke-width="3">
<defs><marker id="ah" markerUnits="userSpaceOnUse" markerWidth="30" markerHeight="12" refX="0" refY="6" orient="auto" viewBox="0 0 30 12"><path d="M0 0 30 6 0 12z" fill="#e8281e" stroke="none"/></marker></defs>
<g marker-end="url(#ah)">
<path d="M548 513.300H653"/><path d="M1048 591.500H1104"/><path d="M1414 492.300H1591"/><path d="M1623 558.300H1530"/><path d="M1452.500 820V907.400H2288.300V872"/><path d="M1220.300 424V1063.500"/>
<path d="M1150 1124.300H1031"/><path d="M1472.700 1105V1028H2143"/><path d="M1353 1205.400H1593"/><path d="M496 1554.400H600"/><path d="M703 1627.300L524 1623.500"/><path d="M754.300 1316V1834.500"/>
<path d="M2264.500 1888V1811.500H1344.400V1708"/><path d="M1798 1269.700H1566.500V1854.500"/><path d="M1811.800 1721V1853.500"/><path d="M1869.600 1875V1768"/><path d="M2358.700 1357V1853.500"/>
<path d="M1405 2498.500H1191.500V2642.500"/><path d="M1289.400 2662V2563"/><path d="M1567 2043.500H1649.500V2638.500"/><path d="M1812 2696.500H1918"/><path d="M1948 2781H1863"/>
<path d="M1646.700 3301V3396"/><path d="M1713.800 3412V3352.500"/><path d="M2015.300 3084V3381"/><path d="M2090.600 3406V3341.500"/>
</g>
<g fill="#e8281e" stroke="none"><circle cx="548" cy="513.300" r="18"/><circle cx="1220" cy="424" r="18"/><circle cx="1414" cy="493" r="18"/>
<g fill-opacity=".8"><circle cx="1453" cy="804" r="18"/><circle cx="1169" cy="1122" r="18"/><circle cx="1474" cy="1123" r="18"/><circle cx="1336" cy="1203" r="18"/><circle cx="1804" cy="1257" r="18"/><circle cx="752.500" cy="1299" r="18"/><circle cx="720.500" cy="1627" r="18"/><circle cx="2356" cy="1341" r="18"/><circle cx="1813.500" cy="1704" r="18"/><circle cx="1550" cy="2040" r="18"/><circle cx="1418" cy="2492.700" r="18"/><circle cx="1795" cy="2694" r="18"/><circle cx="1647" cy="3284" r="18"/><circle cx="2015" cy="3067" r="18"/></g></g>
</svg>
</div>
</body>
</html>
